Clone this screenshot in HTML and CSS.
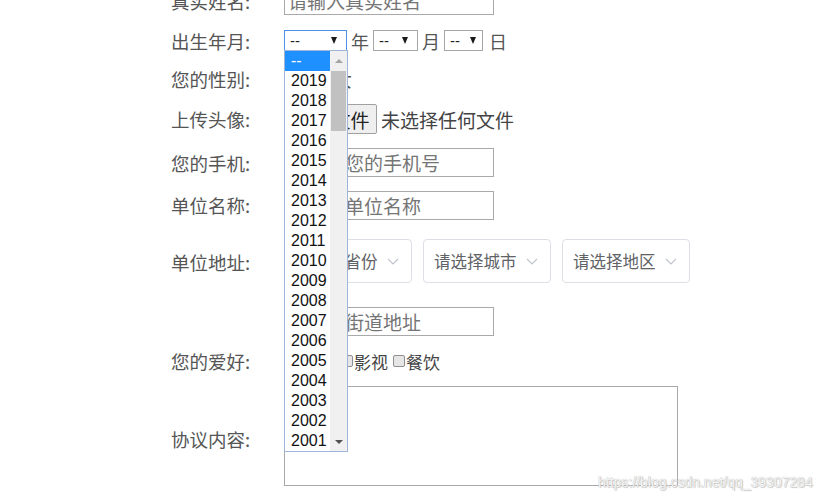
FILE: index.html
```html
<!DOCTYPE html>
<html lang="zh-CN">
<head>
  <meta charset="UTF-8">
  <title>用户注册</title>
  <link rel="stylesheet" href="styles.css">
</head>
<body>
<div id="register">
  <form name="register" action="" method="get">
    <div class="row row-name">
      <span class="label">真实姓名:</span>
      <input type="text" class="text" placeholder="请输入真实姓名">
    </div>
    <div class="row row-birth">
      <span class="label">出生年月:</span>
      <div class="birth">
        <div class="year-wrap">
          <span class="sel sel-year focus"><span>--</span><i class="arrow"></i></span>
          <!--展开的年份下拉列表-->
          <div class="year-list">
            <ul>
              <li class="on">--</li>
              <li>2019</li>
              <li>2018</li>
              <li>2017</li>
              <li>2016</li>
              <li>2015</li>
              <li>2014</li>
              <li>2013</li>
              <li>2012</li>
              <li>2011</li>
              <li>2010</li>
              <li>2009</li>
              <li>2008</li>
              <li>2007</li>
              <li>2006</li>
              <li>2005</li>
              <li>2004</li>
              <li>2003</li>
              <li>2002</li>
              <li>2001</li>
            </ul>
            <div class="scrollbar">
              <span class="sb-btn"><i class="up"></i></span>
              <b class="thumb"></b>
              <span class="sb-btn sb-bottom"><i class="down"></i></span>
            </div>
          </div>
        </div>
        <span class="unit">年</span>
        <span class="sel sel-month"><span>--</span><i class="arrow"></i></span>
        <span class="unit">月</span>
        <span class="sel sel-day"><span>--</span><i class="arrow"></i></span>
        <span class="unit unit-last">日</span>
      </div>
    </div>
    <div class="row row-gender">
      <span class="label">您的性别:</span>
      <div class="choices">
        <i class="radio"></i><span>男</span>
        <i class="radio"></i><span>女</span>
      </div>
    </div>
    <div class="row row-avatar">
      <span class="label">上传头像:</span>
      <span class="file-btn">选择文件</span>
      <span class="file-name">未选择任何文件</span>
    </div>
    <div class="row row-phone">
      <span class="label">您的手机:</span>
      <input type="text" class="text" placeholder="请输入您的手机号">
    </div>
    <div class="row row-company">
      <span class="label">单位名称:</span>
      <input type="text" class="text" placeholder="请输入单位名称">
    </div>
    <div class="row row-address">
      <span class="label">单位地址:</span>
      <div class="area">
        <div class="el-select">请选择省份<svg width="12" height="7" viewBox="0 0 12 7"><polyline points="1,1 6,6 11,1" fill="none" stroke="#c0c4cc" stroke-width="1.2"/></svg></div>
        <div class="el-select">请选择城市<svg width="12" height="7" viewBox="0 0 12 7"><polyline points="1,1 6,6 11,1" fill="none" stroke="#c0c4cc" stroke-width="1.2"/></svg></div>
        <div class="el-select">请选择地区<svg width="12" height="7" viewBox="0 0 12 7"><polyline points="1,1 6,6 11,1" fill="none" stroke="#c0c4cc" stroke-width="1.2"/></svg></div>
      </div>
    </div>
    <div class="row row-street">
      <span class="label"></span>
      <input type="text" class="text" placeholder="请输入街道地址">
    </div>
    <div class="row row-hobby">
      <span class="label">您的爱好:</span>
      <div class="choices hobby">
        <i class="check"></i><span>阅读</span>
        <i class="check"></i><span>影视</span>
        <i class="check"></i><span>餐饮</span>
      </div>
    </div>
    <div class="row row-agree">
      <span class="label">协议内容:</span>
      <textarea class="agree"></textarea>
    </div>
  </form>
</div>
<div class="watermark">https://blog.csdn.net/qq_39307284</div>
</body>
</html>
```

FILE: styles.css
```css
body {
  margin: 0;
  font-family: "Liberation Sans", "Noto Sans CJK SC", sans-serif;
  color: #555;
  background-color: #fff;
}

#register {
  margin: -20px 0 0 171px;
}

.row {
  display: flex;
  align-items: center;
}

.label {
  width: 113px;
  flex-shrink: 0;
  font-size: 18.5px;
  font-family: "Noto Sans CJK SC", sans-serif;
}

.row-name { height: 41px; }
.row-birth { height: 40px; }
.row-gender { height: 36px; }
.row-avatar { height: 44px; }
.row-phone { height: 43px; }
.row-company { height: 42px; }
.row-address { height: 70px; }
.row-street { height: 50px; }
.row-hobby { height: 30px; }
.row-agree { height: 120px; }

.row-address .label {
  margin-top: 2px;
}

.row-agree .label {
  margin-top: 6px;
}

.text {
  width: 210px;
  height: 29px;
  box-sizing: border-box;
  margin: 0;
  padding: 0 3px;
  border: 1px solid #a9a9a9;
  font-size: 19px;
  font-family: "Noto Sans CJK SC", sans-serif;
  color: #333;
  outline: none;
}

.text::placeholder {
  color: #757575;
}

/* 出生年月 */
.birth {
  display: flex;
  align-items: center;
  margin-top: -1px;
}

.year-wrap {
  position: relative;
}

.sel {
  display: flex;
  align-items: center;
  justify-content: space-between;
  height: 21px;
  box-sizing: border-box;
  padding: 0 9px 0 5px;
  border: 1px solid #a6a6a6;
  font-size: 15px;
  color: #222;
  background-color: #fff;
}

.sel.focus {
  border-color: #4d90e8;
}

.sel-year { width: 63px; }
.sel-month { width: 45px; }
.sel-day { width: 39px; padding-right: 6px; }

.arrow {
  width: 0;
  height: 0;
  border-left: 3.5px solid transparent;
  border-right: 3.5px solid transparent;
  border-top: 7px solid #1a1a1a;
}

.unit {
  margin: 0 4px;
  font-size: 18px;
  font-family: "Noto Sans CJK SC", sans-serif;
}

.unit-last {
  margin-left: 6px;
}

.year-list {
  position: absolute;
  left: 0;
  top: 20px;
  z-index: 10;
  display: flex;
  width: 64px;
  height: 402px;
  box-sizing: border-box;
  border: 1px solid #9fb6d8;
  background-color: #fff;
}

.year-list ul {
  width: 45px;
  margin: 0;
  padding: 0;
  list-style: none;
}

.year-list li {
  height: 20px;
  line-height: 20px;
  padding-left: 6px;
  font-size: 16px;
  color: #111;
}

.year-list li.on {
  background-color: #1e90ff;
  color: #fff;
}

.scrollbar {
  display: flex;
  flex-direction: column;
  align-items: center;
  width: 17px;
  background-color: #f0f0f0;
}

.sb-btn {
  display: flex;
  align-items: center;
  justify-content: center;
  height: 19px;
  width: 17px;
}

.sb-bottom {
  margin-top: auto;
}

.up {
  width: 0;
  height: 0;
  border-left: 4px solid transparent;
  border-right: 4px solid transparent;
  border-bottom: 4px solid #a3a3a3;
}

.down {
  width: 0;
  height: 0;
  border-left: 4px solid transparent;
  border-right: 4px solid transparent;
  border-top: 4px solid #505050;
}

.thumb {
  width: 15px;
  height: 60px;
  margin-top: 1px;
  background-color: #c1c1c1;
}

/* 单选、复选 */
.choices {
  display: flex;
  align-items: center;
  font-size: 18px;
  font-family: "Noto Sans CJK SC", sans-serif;
}

.radio {
  width: 12px;
  height: 12px;
  box-sizing: border-box;
  margin: 0 2px;
  border: 1px solid #8f8f8f;
  border-radius: 50%;
  background-color: #fff;
}

.hobby {
  font-size: 17px;
  color: #444;
}

.check {
  width: 12px;
  height: 12px;
  box-sizing: border-box;
  margin: 0 1px 0 5px;
  border: 1px solid #8f8f8f;
  border-radius: 2px;
  background-color: #e6e6e6;
}

/* 上传头像 */
.file-btn {
  display: flex;
  align-items: center;
  justify-content: center;
  width: 91px;
  height: 30px;
  box-sizing: border-box;
  margin-left: 2px;
  border: 1px solid #a0a0a0;
  border-radius: 2px;
  background-color: #efefef;
  font-size: 19px;
  font-family: "Noto Sans CJK SC", sans-serif;
  color: #222;
}

.file-name {
  margin-left: 4px;
  font-size: 19px;
  font-family: "Noto Sans CJK SC", sans-serif;
  color: #444;
}

/* 单位地址 */
.area {
  display: flex;
  gap: 11px;
}

.el-select {
  display: flex;
  align-items: center;
  justify-content: space-between;
  width: 128px;
  height: 44px;
  box-sizing: border-box;
  padding: 0 12px 0 10px;
  border: 1px solid #dcdfe6;
  border-radius: 4px;
  font-size: 16.5px;
  font-family: "Noto Sans CJK SC", sans-serif;
  color: #606266;
}

.agree {
  width: 394px;
  height: 100px;
  box-sizing: border-box;
  margin: 0;
  border: 1px solid #a9a9a9;
  resize: none;
  outline: none;
}

.watermark {
  position: absolute;
  left: 598px;
  top: 474px;
  font-size: 14px;
  color: #f4f4f4;
  text-shadow: 0 0 1px #aaa, 1px 1px 1px #ccc;
}
```
